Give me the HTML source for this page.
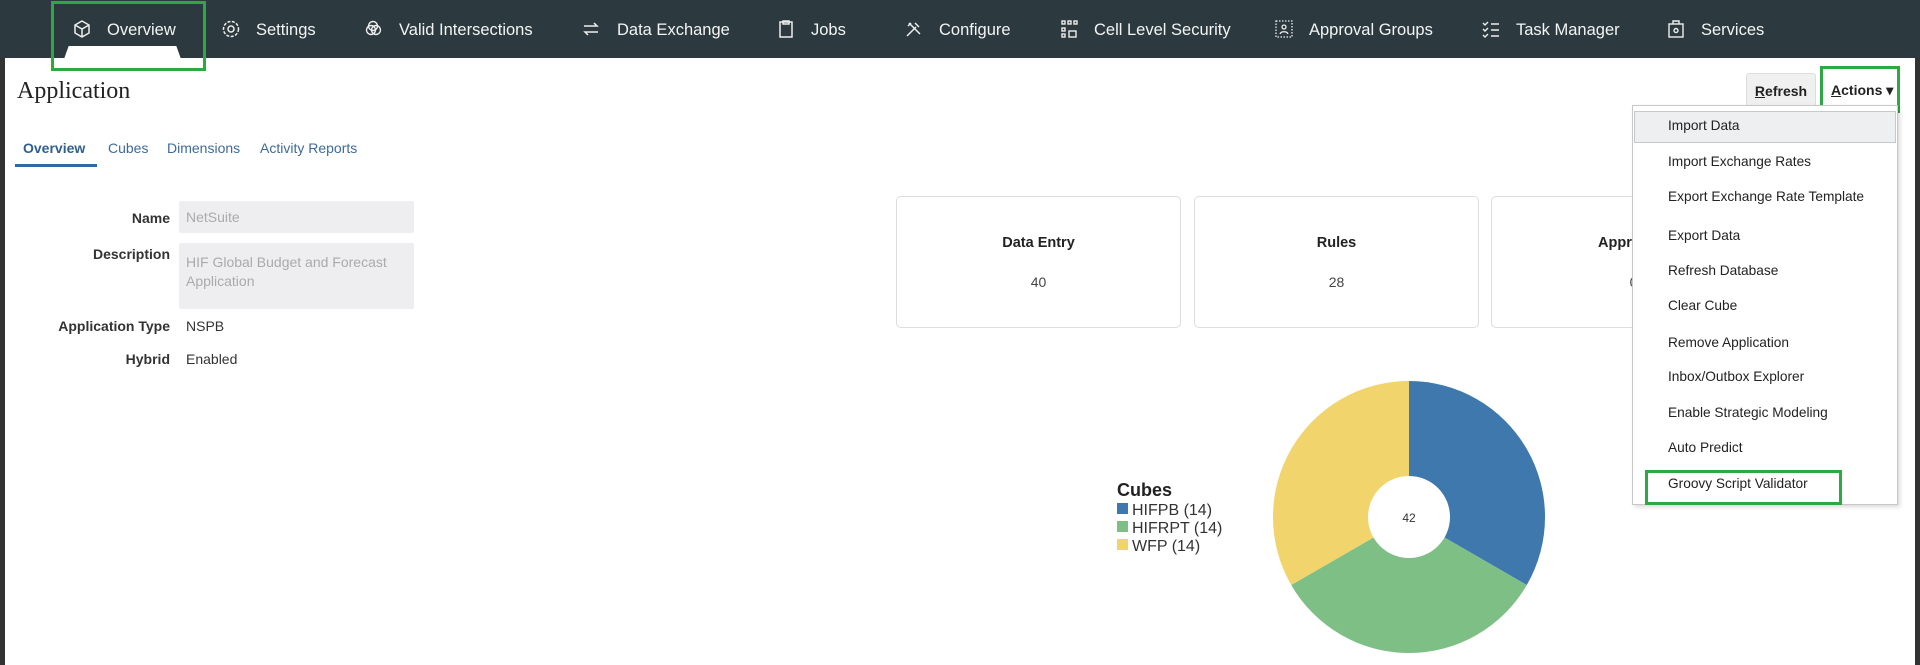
<!DOCTYPE html>
<html><head><meta charset="utf-8"><style>
*{box-sizing:border-box;margin:0;padding:0}
body{width:1920px;height:665px;overflow:hidden;background:#fff;font-family:"Liberation Sans",sans-serif;position:relative;color:#333}
.abs{position:absolute}
.nav{left:0;top:0;width:1920px;height:58px;background:#2c3a3f}
.ni{position:absolute;top:20px;color:#f2f4f4;font-size:16.5px;line-height:20px;white-space:nowrap}
.ic{position:absolute;top:19px;width:20px;height:20px}
.lbl{position:absolute;font-size:14px;font-weight:bold;color:#333;text-align:right;width:150px;left:20px}
.mi{position:absolute;left:1668px;font-size:13.7px;color:#222;white-space:nowrap}
.card{position:absolute;top:196px;height:132px;border:1px solid #ddd;border-radius:5px;background:#fff;text-align:center}
.card b{position:absolute;left:0;right:0;top:38px;font-size:14.5px;color:#222}
.card span{position:absolute;left:0;right:0;top:77px;font-size:14px;color:#444}
.tab{position:absolute;top:140px;font-size:14px;color:#3d6b9c}
</style></head><body>
<div class="abs" style="left:0;top:0;width:5px;height:665px;background:#333"></div>
<div class="abs" style="left:1915px;top:0;width:5px;height:665px;background:#333"></div>
<div class="abs nav"></div>
<div class="abs" style="left:64px;top:46px;width:117px;height:13px;background:#fff;clip-path:polygon(4% 0,96% 0,100% 100%,0 100%)"></div>
<svg class="ic" style="left:72px" viewBox="0 0 20 20" fill="none" stroke="#eee" stroke-width="1.5"><path d="M10 2l7 4v8l-7 4-7-4V6z M3 6l7 4 7-4 M10 10v8"/></svg>
<div class="ni" style="left:107px">Overview</div>
<svg class="ic" style="left:221px" viewBox="0 0 20 20" fill="none" stroke="#eee" stroke-width="1.5"><circle cx="10" cy="10" r="3"/><circle cx="10" cy="10" r="7.5" stroke-dasharray="3 1.5"/></svg>
<div class="ni" style="left:256px">Settings</div>
<svg class="ic" style="left:365px" viewBox="0 0 20 20" fill="none" stroke="#eee" stroke-width="1.4"><circle cx="8" cy="7" r="4.5"/><circle cx="6" cy="11" r="4.5"/><circle cx="11" cy="11" r="4.5"/></svg>
<div class="ni" style="left:399px">Valid Intersections</div>
<svg class="ic" style="left:581px" viewBox="0 0 20 20" fill="none" stroke="#eee" stroke-width="1.5"><path d="M3 7h13l-3-3 M17 13H4l3 3"/></svg>
<div class="ni" style="left:617px">Data Exchange</div>
<svg class="ic" style="left:776px" viewBox="0 0 20 20" fill="none" stroke="#eee" stroke-width="1.5"><rect x="4" y="3" width="12" height="15"/><rect x="7" y="2" width="6" height="3"/></svg>
<div class="ni" style="left:811px">Jobs</div>
<svg class="ic" style="left:904px" viewBox="0 0 20 20" fill="none" stroke="#eee" stroke-width="1.5"><path d="M3 17l9-9 M11 4l4 4 M5 4l11 11 M4 7l3-3"/></svg>
<div class="ni" style="left:939px">Configure</div>
<svg class="ic" style="left:1060px" viewBox="0 0 20 20" fill="none" stroke="#eee" stroke-width="1.4"><rect x="2" y="2" width="3" height="3"/><rect x="8" y="2" width="3" height="3"/><rect x="14" y="2" width="3" height="3"/><rect x="2" y="9" width="3" height="3"/><rect x="2" y="15" width="3" height="3"/><rect x="9" y="12" width="7" height="6"/></svg>
<div class="ni" style="left:1094px">Cell Level Security</div>
<svg class="ic" style="left:1274px" viewBox="0 0 20 20" fill="none" stroke="#eee" stroke-width="1.3"><rect x="2" y="2" width="16" height="16" stroke-dasharray="1.5 1.5"/><circle cx="10" cy="8" r="2"/><path d="M6 15c1-3 7-3 8 0"/></svg>
<div class="ni" style="left:1309px">Approval Groups</div>
<svg class="ic" style="left:1481px" viewBox="0 0 20 20" fill="none" stroke="#eee" stroke-width="1.4"><path d="M2 4l2 2 3-3 M2 10l2 2 3-3 M2 16l2 2 3-3 M10 5h8 M10 11h8 M10 17h8"/></svg>
<div class="ni" style="left:1516px">Task Manager</div>
<svg class="ic" style="left:1666px" viewBox="0 0 20 20" fill="none" stroke="#eee" stroke-width="1.4"><rect x="3" y="5" width="14" height="13"/><path d="M7 5V2h6v3"/><circle cx="10" cy="11.5" r="2"/></svg>
<div class="ni" style="left:1701px">Services</div>
<div class="abs" style="left:51px;top:1px;width:155px;height:70px;border:3px solid #2ea843"></div>

<div class="abs" style="left:17px;top:78px;font-family:'Liberation Serif',serif;font-size:24px;color:#222">Application</div>

<div class="tab" style="left:23px;font-weight:bold;color:#2f5f8f">Overview</div>
<div class="abs" style="left:15px;top:164px;width:82px;height:3px;background:#2f6aa3"></div>
<div class="tab" style="left:108px">Cubes</div>
<div class="tab" style="left:167px">Dimensions</div>
<div class="tab" style="left:260px">Activity Reports</div>

<div class="lbl" style="top:210px">Name</div>
<div class="abs" style="left:179px;top:201px;width:235px;height:32px;background:#eeeef0;border-radius:2px;font-size:14px;color:#aaa;padding:8px 7px">NetSuite</div>
<div class="lbl" style="top:246px">Description</div>
<div class="abs" style="left:179px;top:243px;width:235px;height:66px;background:#eeeef0;border-radius:2px;font-size:14px;color:#aaa;padding:10px 7px;line-height:19px">HIF Global Budget and Forecast Application</div>
<div class="lbl" style="top:318px">Application Type</div>
<div class="abs" style="left:186px;top:318px;font-size:14px">NSPB</div>
<div class="lbl" style="top:351px">Hybrid</div>
<div class="abs" style="left:186px;top:351px;font-size:14px">Enabled</div>

<div class="card" style="left:896px;width:285px"><b>Data Entry</b><span>40</span></div>
<div class="card" style="left:1194px;width:285px"><b>Rules</b><span>28</span></div>
<div class="card" style="left:1491px;width:285px"><b>Approvals</b><span>0</span></div>

<svg class="abs" style="left:0;top:0" width="1920" height="665">
<path d="M1409 517V381A136 136 0 0 1 1526.8 585Z" fill="#3f78ad"/>
<path d="M1409 517L1526.8 585A136 136 0 0 1 1291.2 585Z" fill="#7ebf86"/>
<path d="M1409 517L1291.2 585A136 136 0 0 1 1409 381Z" fill="#f1d56c"/>
<circle cx="1409" cy="517" r="41" fill="#fff"/>
<text x="1409" y="522" font-size="12" text-anchor="middle" fill="#333" font-family="Liberation Sans">42</text>
<text x="1117" y="496" font-size="18" font-weight="bold" fill="#222" font-family="Liberation Sans">Cubes</text>
<rect x="1117" y="503" width="11" height="11" fill="#3f78ad"/>
<text x="1132" y="515" font-size="16" fill="#333" font-family="Liberation Sans">HIFPB (14)</text>
<rect x="1117" y="521" width="11" height="11" fill="#7ebf86"/>
<text x="1132" y="533" font-size="16" fill="#333" font-family="Liberation Sans">HIFRPT (14)</text>
<rect x="1117" y="539" width="11" height="11" fill="#f1d56c"/>
<text x="1132" y="551" font-size="16" fill="#333" font-family="Liberation Sans">WFP (14)</text>
</svg>

<div class="abs" style="left:1746px;top:73px;width:70px;height:36px;background:#f0f0f0;border:1px solid #ddd;border-radius:3px;font-size:14px;font-weight:bold;color:#222;text-align:center;padding-top:9px"><u>R</u>efresh</div>
<div class="abs" style="left:1831px;top:82px;font-size:14px;font-weight:bold;color:#222"><u>A</u>ctions ▾</div>
<div class="abs" style="left:1820px;top:66px;width:80px;height:47px;border:3px solid #2ea843"></div>

<div class="abs" style="left:1632px;top:105px;width:266px;height:400px;background:#fff;border:1px solid #c8c8c8;box-shadow:2px 2px 4px rgba(0,0,0,.15)"></div>
<div class="abs" style="left:1634px;top:111px;width:262px;height:32px;background:#eeeff0;border:1px solid #c6c9cc"></div>
<div class="mi" style="top:118px">Import Data</div>
<div class="mi" style="top:154px">Import Exchange Rates</div>
<div class="mi" style="top:189px">Export Exchange Rate Template</div>
<div class="mi" style="top:228px">Export Data</div>
<div class="mi" style="top:263px">Refresh Database</div>
<div class="mi" style="top:298px">Clear Cube</div>
<div class="mi" style="top:335px">Remove Application</div>
<div class="mi" style="top:369px">Inbox/Outbox Explorer</div>
<div class="mi" style="top:405px">Enable Strategic Modeling</div>
<div class="mi" style="top:440px">Auto Predict</div>
<div class="mi" style="top:476px">Groovy Script Validator</div>
<div class="abs" style="left:1645px;top:470px;width:197px;height:35px;border:3px solid #2ea843"></div>
</body></html>
